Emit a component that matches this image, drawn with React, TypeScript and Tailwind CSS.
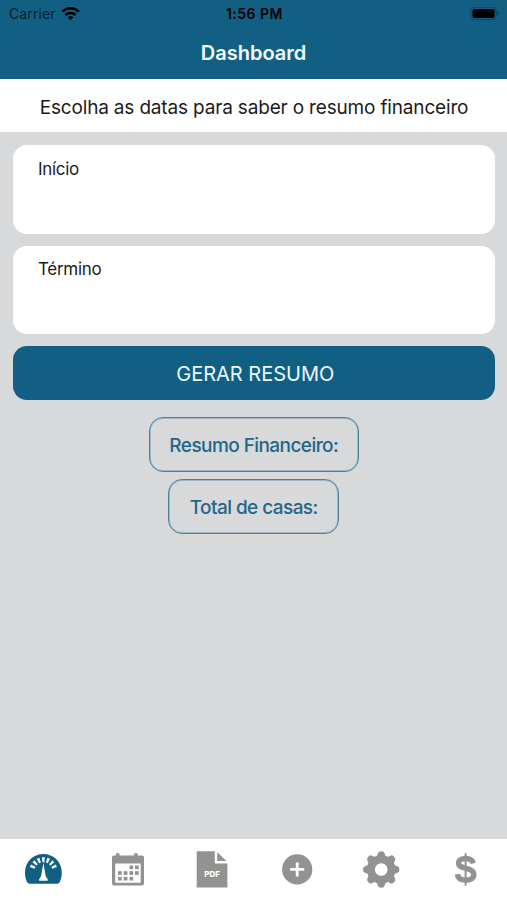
import type { ReactNode } from 'react';

function WifiIcon() {
  return (
    <svg className="ml-[5px] h-[14px] w-[19px]" viewBox="0 0 19 14" fill="none">
      <path d="M1.3 4.600a11.7 11.7 0 0 1 16.4 0" stroke="#000" strokeWidth="2.700" />
      <path d="M4.400 8a7.200 7.200 0 0 1 10.200 0" stroke="#000" strokeWidth="2.500" />
      <path d="M9.500 13.200 6.700 10.400a4 4 0 0 1 5.600 0Z" fill="#000" />
    </svg>
  );
}

function BatteryIcon() {
  return (
    <svg className="h-[14px] w-[30px]" viewBox="0 0 30 14" fill="none">
      <rect x="0.7" y="0.2" width="25.6" height="12.4" rx="4" stroke="#0b4561" strokeWidth="1" />
      <rect x="2.4" y="1.9" width="22.2" height="9" rx="2.2" fill="#000" />
      <path d="M27.6 4.5v4c1-.3 1.6-1 1.6-2s-.6-1.7-1.6-2Z" fill="#0b4561" />
    </svg>
  );
}

function GaugeIcon() {
  const ticks = [-66, -44, -22, 0, 22, 44, 66];
  return (
    <svg className="h-10 w-10" viewBox="0 0 40 40">
      <path d="M5.5 33.7Q4 33.7 3.2 32.3C1.8 29.5 1 26.5 1 22.7 1 12 9.2 4 19.4 4s18.4 8 18.4 18.7c0 3.8-.8 6.8-2.2 9.6q-.8 1.4-2.3 1.4Z" fill="#125f84" />
      {ticks.map((angle) => (
        <path key={angle} d="M18 7.300h2.800l-.4 5h-2Z" fill="#fff" transform={`rotate(${angle} 19.4 21.5)`} />
      ))}
      <path d="M19.400 13 21.700 26l2 3.300v1.500h-8.600v-1.500l2-3.300Z" fill="#fff" />
    </svg>
  );
}

function CalendarIcon() {
  const dots = [[21.5, 17], [27, 17], [10, 22.7], [15.7, 22.7], [21.5, 22.7], [27, 22.7], [10, 28.3], [15.7, 28.3], [21.5, 28.3]];
  return (
    <svg className="h-10 w-10" viewBox="0 0 40 40" fill="#929292">
      <path fillRule="evenodd" d="M5.5 5.500H8V3.300h3.500v2.200h14.700V3.300h3.500v2.200h4.300a2 2 0 0 1 2 2v26a2 2 0 0 1-2 2H6a2 2 0 0 1-2-2v-26a2 2 0 0 1 1.500-2ZM7.200 13.500v19.300h25.500V13.500Z" />
      {dots.map(([x, y]) => (
        <rect key={`${x}-${y}`} x={x} y={y - 1.5} width="3.7" height="3.7" />
      ))}
    </svg>
  );
}

function PdfIcon() {
  return (
    <svg className="h-10 w-10" viewBox="0 0 40 40" fill="#929292">
      <path d="M4.7 1.300h18.100v12.200h12.600v24H4.700Z" />
      <path d="M25.200 2.200 34.500 11h-9.300Z" />
      <text x="20.2" y="27" textAnchor="middle" fontFamily="Inter, sans-serif" fontWeight="800" fontSize="8" fill="#fff">PDF</text>
    </svg>
  );
}

function PlusIcon() {
  return (
    <svg className="h-10 w-10" viewBox="0 0 40 40">
      <circle cx="20.2" cy="19.4" r="15.1" fill="#929292" />
      <path d="M20.2 12.400v14M13.200 19.400h14" stroke="#fff" strokeWidth="2.8" />
    </svg>
  );
}

function GearIcon() {
  const teeth = [0, 45, 90, 135, 180, 225, 270, 315];
  return (
    <svg className="h-10 w-10" viewBox="0 0 40 40">
      <g fill="#929292">
        <circle cx="20.2" cy="19.5" r="14.2" />
        {teeth.map((angle) => (
          <path key={angle} d="M14 7.500q2.500-1.400 2.900-4.200.3-2 3.300-2t3.300 2q.4 2.800 2.900 4.200Z" transform={`rotate(${angle} 20.2 19.5)`} />
        ))}
      </g>
      <circle cx="20.2" cy="19.5" r="6.3" fill="#fff" />
    </svg>
  );
}

function DollarIcon() {
  return (
    <svg className="h-10 w-10" viewBox="0 0 40 40" fill="none" stroke="#929292">
      <path d="M28.2 13.300C27.400 9.900 24.600 8.500 20.600 8.500c-4.200 0-7 1.700-7 4.600 0 7.200 15.200 3.400 15.200 11.400 0 3.700-3.300 5.600-8 5.600-4.800 0-8-2.200-8.500-6" strokeWidth="5.4" />
      <path d="M20.600 3.300v32.400" strokeWidth="2" />
    </svg>
  );
}

function DateCard({ label }: { label: string }) {
  return (
    <div className="h-[88.5px] rounded-[14px] bg-white px-[25px] pt-[11.5px] text-[17px] leading-6 tracking-[-0.3px] text-[#1b1b1b]">
      {label}
    </div>
  );
}

function SummaryBox({ children, className }: { children: ReactNode; className: string }) {
  return (
    <div className={`flex h-[55px] items-center justify-center rounded-[14px] border border-[#4a83a2] pt-[3px] text-[19px] font-medium tracking-[-0.57px] whitespace-nowrap text-[#1f6789] shadow-[inset_0_0_0_1px_rgba(74,131,162,0.4)] ${className}`}>
      {children}
    </div>
  );
}

export default function App() {
  const tabs = [GaugeIcon, CalendarIcon, PdfIcon, PlusIcon, GearIcon, DollarIcon];
  return (
    <div className="flex h-[900px] w-[507px] flex-col overflow-hidden bg-[#d7d9db] font-['Inter',sans-serif]">
      <header className="h-[79px] bg-[#125f84]">
        <div className="grid h-[27px] grid-cols-3 items-center pr-[7px] pl-[9px] text-[14px]">
          <div className="flex items-center text-[#06202d]">
            <span className="tracking-[0.1px]">Carrier</span>
            <WifiIcon />
          </div>
          <div className="text-center text-[14px] font-semibold tracking-[0.5px] text-black">1:56 PM</div>
          <div className="flex justify-end"><BatteryIcon /></div>
        </div>
        <h1 className="flex h-[51px] items-center justify-center text-[20px] font-semibold text-[#f4fbff]">Dashboard</h1>
      </header>
      <p className="flex h-[53px] items-center justify-center bg-white pt-[5px] pl-px text-[19px] tracking-[-0.17px] whitespace-nowrap text-[#1b1b1b]">
        Escolha as datas para saber o resumo financeiro
      </p>
      <main className="flex flex-1 flex-col pt-[13px] pr-[12.5px] pl-[13px]">
        <div className="flex flex-col gap-3">
          <DateCard label="Início" />
          <DateCard label="Término" />
          <button className="h-[54px] rounded-[14px] bg-[#125f84] pt-[2px] pl-[3px] text-[20px] text-[#eef9ff]">GERAR RESUMO</button>
        </div>
        <div className="mt-[17px] flex flex-col items-center gap-[7px]">
          <SummaryBox className="w-[210px]">Resumo Financeiro:</SummaryBox>
          <SummaryBox className="w-[171px]">Total de casas:</SummaryBox>
        </div>
      </main>
      <nav className="grid h-[61px] grid-cols-6 justify-items-center bg-white pt-[11px] pl-[2px]">
        {tabs.map((Icon, index) => (
          <Icon key={index} />
        ))}
      </nav>
    </div>
  );
}
